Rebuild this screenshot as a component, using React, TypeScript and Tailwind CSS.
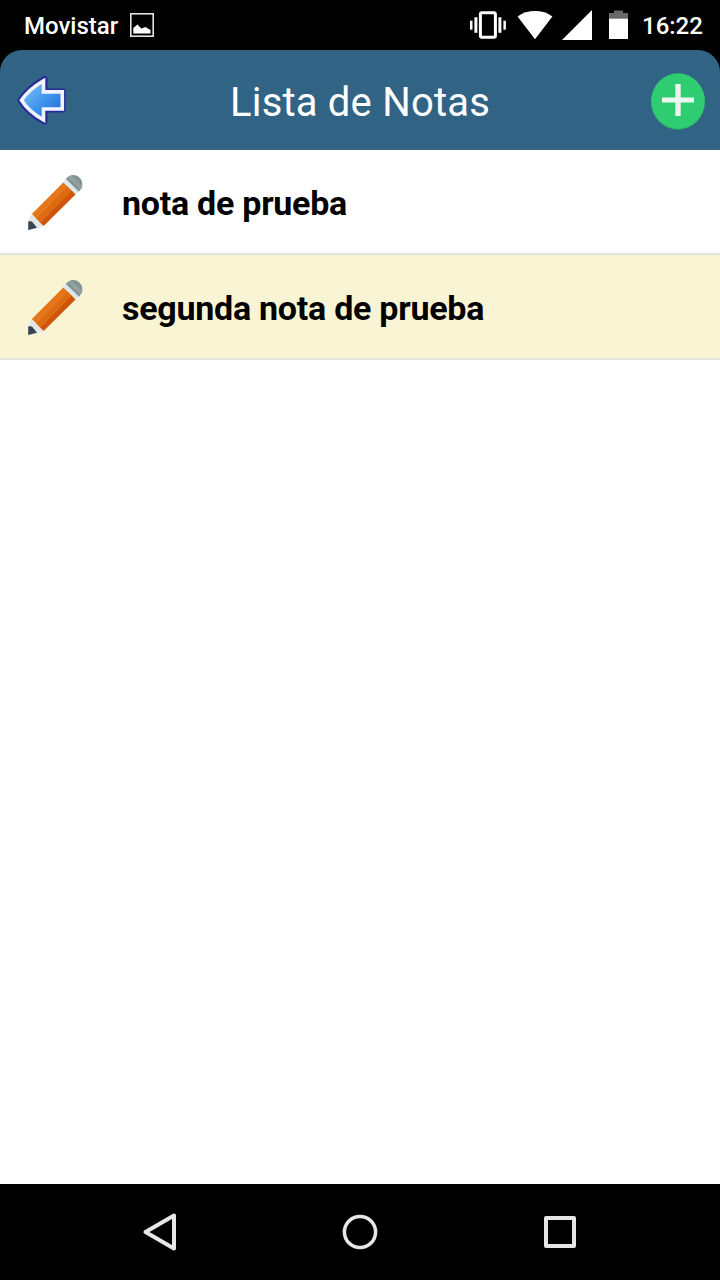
function PictureIcon() {
  return (
    <svg className="h-6 w-6 shrink-0" viewBox="130 13 24 24" aria-hidden="true">
      <rect x="130.8" y="13.8" width="22.4" height="22.4" fill="none" stroke="#dfe3e1" strokeWidth="1.6" />
      <path d="M133.3 33.5V28L137.5 24.5L141.3 28.5L145.5 27L150.5 30V33.5Z" fill="#fff" />
    </svg>
  );
}

function StatusIcons() {
  return (
    <svg className="h-[50px] w-[164px] shrink-0" viewBox="468 0 164 50" fill="#fff" aria-hidden="true">
      <rect x="480.4" y="12.8" width="15" height="24.4" rx="1.5" fill="none" stroke="#fff" strokeWidth="3" />
      <rect x="470" y="20.7" width="2.5" height="9" />
      <rect x="474.4" y="17.3" width="3" height="15.5" />
      <rect x="498.4" y="17.3" width="3" height="15.5" />
      <rect x="503.4" y="20.7" width="2.5" height="9" />
      <path d="M535 39.3L517.6 16.5C527.5 9.2 542.5 9.2 552.4 16.5Z" />
      <path d="M592 10V40H562Z" />
      <path d="M609 19V13H614V10.5H623V13H628V19Z" fill="#686868" />
      <rect x="609" y="18.7" width="19" height="20.3" />
    </svg>
  );
}

function BackArrow() {
  return (
    <svg className="h-[60px] w-[60px]" viewBox="12 70 60 60" aria-hidden="true">
      <defs>
        <linearGradient id="arrowBlue" x1="0" y1="0" x2="1" y2="1">
          <stop offset="0" stopColor="#8ec6fb" />
          <stop offset=".5" stopColor="#4298ee" />
          <stop offset="1" stopColor="#1762cf" />
        </linearGradient>
      </defs>
      <path
        d="M44.5 78.8V91.4H62.6V109.4H44.5V121.6C36 117 26.5 110 20.5 100.3C26.5 91 36 84 44.5 78.8Z"
        fill="#242c98" stroke="#242c98" strokeWidth="6" strokeLinejoin="round"
      />
      <path
        d="M43.5 80.8V91.9H62.3V109H43.5V120C35.5 115.5 27 109 21.5 100.3C27 92 35.5 85.5 43.5 80.8Z"
        fill="url(#arrowBlue)" stroke="#f3f3ff" strokeWidth="3.6"
      />
    </svg>
  );
}

function AddIcon() {
  return (
    <svg className="h-[60px] w-[60px]" viewBox="648 71 60 60" aria-hidden="true">
      <ellipse cx="678" cy="101.5" rx="27" ry="28.2" fill="#27b868" />
      <ellipse cx="678" cy="101" rx="26.6" ry="27.5" fill="#2fcc71" />
      <path d="M675.4 84H680.7V97.6H694V102.6H680.7V116H675.4V102.6H662V97.6H675.4Z" fill="#edf5f1" />
    </svg>
  );
}

function PencilIcon() {
  return (
    <svg className="h-[60px] w-[60px] shrink-0" viewBox="26 172 60 60" aria-hidden="true">
      <path d="M65.5 179.5C68.5 174.7 75 173.5 79.3 177.4C83.7 181.4 83.2 187.6 78.5 192Z" fill="#819393" />
      <path d="M67.6 177.2L71 175.4L82.6 186.4L80.8 189.6Z" fill="#93a2a1" />
      <path d="M62.8 182.3L66 179L78.7 191.6L75.3 195Z" fill="#dfe8e9" />
      <path d="M31.5 214.5L43.7 226L39 228L28.2 230L28.5 220Z" fill="#e2e8e8" />
      <path d="M28.3 221.2L32 221.5L37 227.8L28.2 230Z" fill="#374450" />
      <path d="M31.8 214L63.3 182.4L67.5 186.4L36 218.2Z" fill="#e5771a" />
      <path d="M35.8 218.2L67.3 186.2L71.6 190.5L40 222.4Z" fill="#de6a0d" />
      <path d="M39.9 222.4L71.4 190.3L75.5 194.4L43.7 226Z" fill="#cf5608" />
    </svg>
  );
}

const notes = [
  { title: "nota de prueba", row: "bg-white" },
  { title: "segunda nota de prueba", row: "bg-[#f9f5d4]" },
];

export default function App() {
  return (
    <div className="flex h-[1280px] w-[720px] flex-col overflow-hidden bg-black font-['Roboto',sans-serif]">
      <div className="flex h-[50px] shrink-0 items-center justify-between pr-4 pl-6 text-[24px] font-medium text-white">
        <div className="flex items-center gap-3">
          <span className="w-[94px] pt-0.5 whitespace-nowrap">Movistar</span>
          <PictureIcon />
        </div>
        <div className="flex items-center gap-[10px]">
          <StatusIcons />
          <span className="w-[62px] pt-0.5 whitespace-nowrap">16:22</span>
        </div>
      </div>
      <header className="flex h-[100px] shrink-0 items-center justify-between rounded-t-[22px] bg-[#316384] px-3 text-white">
        <button type="button" aria-label="Volver"><BackArrow /></button>
        <h1 className="pt-1.5 text-[40px] tracking-[0.2px]">Lista de Notas</h1>
        <button type="button" aria-label="Agregar nota" className="pt-0.5"><AddIcon /></button>
      </header>
      <main className="flex-1 bg-white">
        <ul>
          {notes.map((note) => (
            <li
              key={note.title}
              className={`flex h-[105px] items-center gap-9 border-b-2 border-[#dfe4de] pl-[26px] ${note.row}`}
            >
              <PencilIcon />
              <span className="pt-1 text-[34px] font-bold tracking-[-0.26px] text-black">{note.title}</span>
            </li>
          ))}
        </ul>
      </main>
      <nav className="grid h-24 shrink-0 grid-cols-3 place-items-center bg-black px-[60px]">
        <button type="button" aria-label="Atrás">
          <svg className="h-10 w-10" viewBox="140 1212 40 40" fill="none" stroke="#e8e8e8" strokeWidth="4" strokeLinejoin="round">
            <path d="M174 1215.5V1248.5L145.5 1232Z" />
          </svg>
        </button>
        <button type="button" aria-label="Inicio">
          <svg className="h-10 w-10" viewBox="0 0 40 40" fill="none" stroke="#e8e8e8" strokeWidth="3.5">
            <circle cx="20" cy="20" r="15.6" />
          </svg>
        </button>
        <button type="button" aria-label="Recientes">
          <svg className="h-10 w-10" viewBox="0 0 40 40" fill="none" stroke="#e4e6e6" strokeWidth="4" strokeLinejoin="round">
            <rect x="6" y="6" width="28" height="28" />
          </svg>
        </button>
      </nav>
    </div>
  );
}
